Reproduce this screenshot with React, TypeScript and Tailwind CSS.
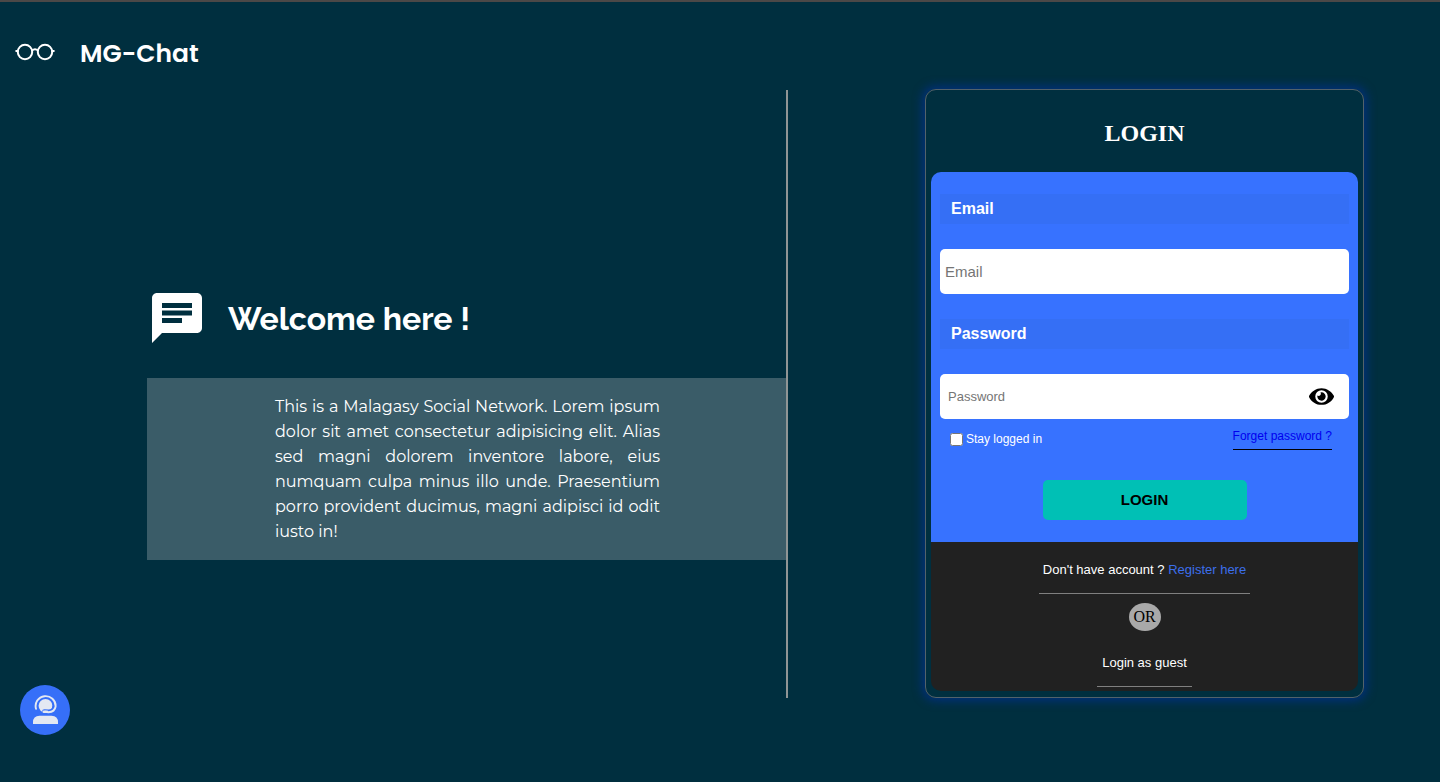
import { MdChat } from "react-icons/md";
import { FaEye } from "react-icons/fa";

function GlassesIcon() {
  return (
    <svg viewBox="0 0 40 40" className="size-10" fill="none" stroke="currentColor" strokeWidth="2" strokeLinecap="round" aria-hidden="true">
      <circle cx="10" cy="20" r="7.200" />
      <circle cx="30" cy="20" r="7.200" />
      <path d="M1.200 19H3M37 19h1.800M17 18.500q3-2.500 6 0" />
    </svg>
  );
}

function SupportIcon() {
  return (
    <svg viewBox="0 0 30 30" className="size-[30px]" fill="none" aria-hidden="true">
      <path d="M3 29v-1.500q0-6.700 6.500-6.700h12q6.500 0 6.500 6.700V29z" fill="#e3e8f2" />
      <circle cx="15.500" cy="10.800" r="6.900" fill="#e3e8f2" />
      <path d="M25 11.500q-.5 5.500-6.500 5.500l-4-.2" stroke="#366ff8" strokeWidth="5" strokeLinecap="round" />
      <path d="M6 13.800A10 9.900 0 1 1 25.600 11.500Q24.800 16.800 18.500 17.200L15 16.800" stroke="#e3e8f2" strokeWidth="1.900" strokeLinecap="round" />
      <path d="M13.800 16.700h3.200" stroke="#e3e8f2" strokeWidth="2.600" strokeLinecap="round" />
    </svg>
  );
}

export default function App() {
  return (
    <div className="flex min-h-screen flex-col border-t-2 border-[#4b4847] bg-[#002f3f] font-['Liberation_Sans',Arial,sans-serif] text-white">
      <header className="flex h-[88px] items-center gap-[25px] px-[15px] pt-3">
        <GlassesIcon />
        <h1 className="pt-[3px] font-[Poppins,Inter,sans-serif] text-[25px] leading-8 font-semibold">MG-Chat</h1>
      </header>
      <main className="flex items-start">
        <section className="flex h-[608px] w-[788px] flex-col justify-center border-r-2 border-[#8f9595] pl-[147px] pb-3">
          <div className="mt-[72px] mb-[30px] flex items-center gap-[21px]">
            <MdChat size={60} />
            <h2 className="pt-0.5 font-[Raleway,Lato,sans-serif] text-[32px] font-bold">Welcome here !</h2>
          </div>
          <div className="bg-[#3a5c68] py-4 pr-[126px] pl-32">
            <p className="text-justify font-[Montserrat,Inter,sans-serif] text-base leading-[25px]">
              This is a Malagasy Social Network. Lorem ipsum dolor sit amet consectetur adipisicing elit. Alias sed magni dolorem inventore labore, eius numquam culpa minus illo unde. Praesentium porro provident ducimus, magni adipisci id odit iusto in!
            </p>
          </div>
        </section>
        <section className="flex flex-1 justify-center pl-[61px]">
          <form
            className="-mt-px w-[439px] rounded-[11px] border border-[#53626a] px-[5px] pb-1.5 shadow-[0_0_10px_3px_#00307a]"
            onSubmit={(e) => e.preventDefault()}
          >
            <h2 className="pt-[29px] pb-6 text-center font-['Liberation_Serif',serif] text-2xl leading-[29px] font-bold">LOGIN</h2>
            <div className="flex flex-col rounded-t-[10px] bg-[#3772ff] px-[9px] py-[22px]">
              <label htmlFor="email" className="mb-[25px] h-[30px] bg-[#356ff5] px-[11px] leading-[30px] font-bold">Email</label>
              <input id="email" type="email" placeholder="Email" className="mb-[25px] h-[45px] rounded-[5px] bg-white px-[5px] text-[15px] text-black placeholder:text-[#757575]" />
              <label htmlFor="password" className="mb-[25px] h-[30px] bg-[#356ff5] px-[11px] leading-[30px] font-bold">Password</label>
              <div className="flex h-[45px] items-center rounded-[5px] bg-white pr-[15px] pl-2">
                <input id="password" type="password" placeholder="Password" className="h-full min-w-0 flex-1 text-[13px] text-black outline-none placeholder:text-[#757575]" />
                <button type="button" aria-label="Show password" className="text-black"><FaEye size={25} /></button>
              </div>
              <div className="mb-[30px] flex h-[31px] items-start justify-between pr-[17px] pl-2.5">
                <label className="flex items-center gap-[3px] pt-[11px] text-xs leading-[18px]">
                  <input type="checkbox" className="size-[13px]" />
                  Stay logged in
                </label>
                <a href="#forget" className="h-[31px] border-b border-black text-xs leading-[34px] text-[#0000ee]">Forget password ?</a>
              </div>
              <button type="submit" className="h-10 w-[204px] self-center rounded-[5px] bg-[#00c0b5] text-[15px] font-bold text-black">LOGIN</button>
            </div>
            <div className="flex flex-col items-center rounded-b-[10px] bg-[#212121] pb-1 text-[13px]">
              <p className="h-[52px] border-b border-[#808080] px-1 leading-[55px]">
                Don't have account ? <a href="#register" className="text-[#3c6fec]">Register here</a>
              </p>
              <span className="mt-[9px] mb-[7px] flex h-7 w-8 items-center justify-center rounded-[50%] bg-[#a9a9a9] font-['Liberation_Serif',serif] text-base text-black">OR</span>
              <a href="#guest" className="h-[49px] border-b border-[#808080] px-[5px] leading-[50px]">Login as guest</a>
            </div>
          </form>
        </section>
      </main>
      <button type="button" aria-label="Support" className="fixed bottom-[47px] left-5 flex size-[50px] items-center justify-center rounded-full bg-[#366ff8]">
        <SupportIcon />
      </button>
    </div>
  );
}
